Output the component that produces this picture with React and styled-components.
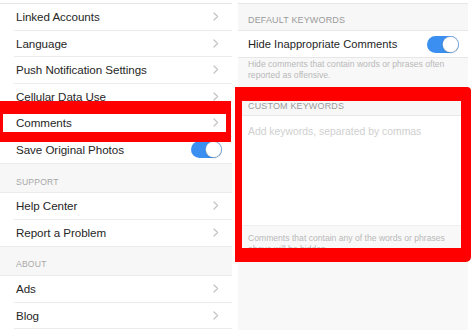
import React from "react";
import styled, { createGlobalStyle } from "styled-components";

const Global = createGlobalStyle`
  html, body { margin: 0; padding: 0; background: #ffffff; }
  body { font-family: "Liberation Sans", Arial, sans-serif; -webkit-font-smoothing: antialiased; }
`;

const Page = styled.div`
  position: relative;
  width: 472px;
  height: 330px;
  overflow: hidden;
  display: flex;
  gap: 6px;
  background: #ffffff;
`;

const LeftPanel = styled.div`
  width: 232px;
  display: flex;
  flex-direction: column;
  background: #ffffff;
`;

const RightPanel = styled.div`
  width: 230px;
  display: flex;
  flex-direction: column;
  background: #f8f8f8;
`;

const TopStrip = styled.div`
  height: 3px;
  flex: none;
  background: #ffffff;
  border-bottom: 1px solid #e6e6e6;
`;

const Row = styled.div`
  height: ${(p) => p.$h || 26.5}px;
  flex: none;
  box-sizing: border-box;
  padding-left: 14px;
  display: flex;
  background: #ffffff;
`;

const RowInner = styled.div`
  flex: 1;
  display: flex;
  align-items: center;
  justify-content: space-between;
  padding: 0 10px 0 2px;
  border-bottom: ${(p) => (p.$last ? "none" : "1px solid #ececec")};
`;

const Label = styled.span`
  font-size: 11.6px;
  color: #262626;
  letter-spacing: -0.05px;
  white-space: nowrap;
`;

const SectionHeader = styled.div`
  height: ${(p) => p.$h || 30}px;
  flex: none;
  box-sizing: border-box;
  background: #f7f7f7;
  border-top: 1px solid #ebebeb;
  border-bottom: 1px solid #ebebeb;
  display: flex;
  align-items: flex-end;
  padding: 0 0 ${(p) => p.$pb || 6}px 16px;
  font-size: 8.6px;
  color: #a8a8a8;
  letter-spacing: 0.2px;
`;

const ToggleTrack = styled.div`
  width: ${(p) => p.$w || 31}px;
  height: 17px;
  border-radius: 9px;
  background: #3b8ff0;
  display: flex;
  justify-content: flex-end;
  align-items: center;
  box-sizing: border-box;
  padding-right: 1px;
`;

const ToggleKnob = styled.div`
  width: 15px;
  height: 15px;
  border-radius: 50%;
  background: #ffffff;
  box-shadow: 0 0 0 0.5px #c9c9c9, 0 1px 2px rgba(0, 0, 0, 0.2);
`;

const Toggle = ({ w }) => (
  <ToggleTrack $w={w}>
    <ToggleKnob />
  </ToggleTrack>
);

const Chevron = () => (
  <svg width="6" height="9" viewBox="0 0 6 9" style={{ marginRight: 3 }}>
    <path d="M1 1 L4.6 4.5 L1 8" fill="none" stroke="#c2c2c2" strokeWidth="1.2" strokeLinecap="round" strokeLinejoin="round" />
  </svg>
);

const NavRow = ({ label, last }) => (
  <Row>
    <RowInner $last={last}>
      <Label>{label}</Label>
      <Chevron />
    </RowInner>
  </Row>
);

/* Right panel parts */
const RightHeader = styled.div`
  height: ${(p) => p.$h}px;
  flex: none;
  box-sizing: border-box;
  background: #f7f7f7;
  display: flex;
  align-items: flex-end;
  padding: 0 0 ${(p) => p.$pb}px 10px;
  font-size: 9px;
  color: #9a9a9a;
  letter-spacing: 0.15px;
  border-bottom: 1px solid #e8e8e8;
`;

const SwitchRow = styled.div`
  height: 27px;
  flex: none;
  box-sizing: border-box;
  background: #ffffff;
  border-bottom: 1px solid #e6e6e6;
  display: flex;
  align-items: center;
  justify-content: space-between;
  padding: 0 9px 0 10px;
`;

const SwitchLabel = styled.span`
  font-size: 11.2px;
  color: #1f1f1f;
  white-space: nowrap;
`;

const Note = styled.div`
  flex: none;
  height: ${(p) => p.$h}px;
  box-sizing: border-box;
  padding: ${(p) => p.$pt}px 12px 0 10px;
  font-size: 8.6px;
  line-height: 11px;
  color: #b8b8b8;
  overflow: hidden;
`;

const TextArea = styled.div`
  height: 110px;
  flex: none;
  box-sizing: border-box;
  background: #ffffff;
  padding: 10px 10px 0 10px;
  font-size: 10.4px;
  color: #cfcfcf;
  white-space: nowrap;
  border-bottom: 1px solid #efefef;
`;

/* Red highlight overlays */
const Highlight = styled.div`
  position: absolute;
  box-sizing: border-box;
  left: ${(p) => p.$x}px;
  top: ${(p) => p.$y}px;
  width: ${(p) => p.$w}px;
  height: ${(p) => p.$hh}px;
  border-style: solid;
  border-color: #fe0000;
  border-width: ${(p) => p.$bw};
  border-radius: ${(p) => p.$r || "0"};
  pointer-events: none;
`;

export default function App() {
  return (
    <>
      <Global />
      <Page>
        <LeftPanel>
          <TopStrip />
          <NavRow label="Linked Accounts" />
          <NavRow label="Language" />
          <NavRow label="Push Notification Settings" />
          <NavRow label="Cellular Data Use" />
          <NavRow label="Comments" />
          <Row>
            <RowInner $last>
              <Label>Save Original Photos</Label>
              <Toggle w={31} />
            </RowInner>
          </Row>
          <SectionHeader $h={30} $pb={5}>SUPPORT</SectionHeader>
          <NavRow label="Help Center" />
          <NavRow label="Report a Problem" last />
          <SectionHeader $h={30} $pb={6}>ABOUT</SectionHeader>
          <NavRow label="Ads" />
          <NavRow label="Blog" />
        </LeftPanel>
        <RightPanel>
          <TopStrip />
          <RightHeader $h={27} $pb={5}>DEFAULT KEYWORDS</RightHeader>
          <SwitchRow>
            <SwitchLabel>Hide Inappropriate Comments</SwitchLabel>
            <Toggle w={32} />
          </SwitchRow>
          <Note $h={29} $pt={1}>
            Hide comments that contain words or phrases often reported as offensive.
          </Note>
          <RightHeader $h={29} $pb={4}>CUSTOM KEYWORDS</RightHeader>
          <TextArea>Add keywords, separated by commas</TextArea>
          <Note $h={104} $pt={7}>
            Comments that contain any of the words or phrases above will be hidden.
          </Note>
        </RightPanel>
        <Highlight $x={0} $y={101} $w={231} $hh={41} $bw="13px 5px 10px 3px" />
        <Highlight $x={235} $y={87} $w={236} $hh={175} $bw="14px 10px 14px 7px" $r="0 4px 5px 0" />
      </Page>
    </>
  );
}
